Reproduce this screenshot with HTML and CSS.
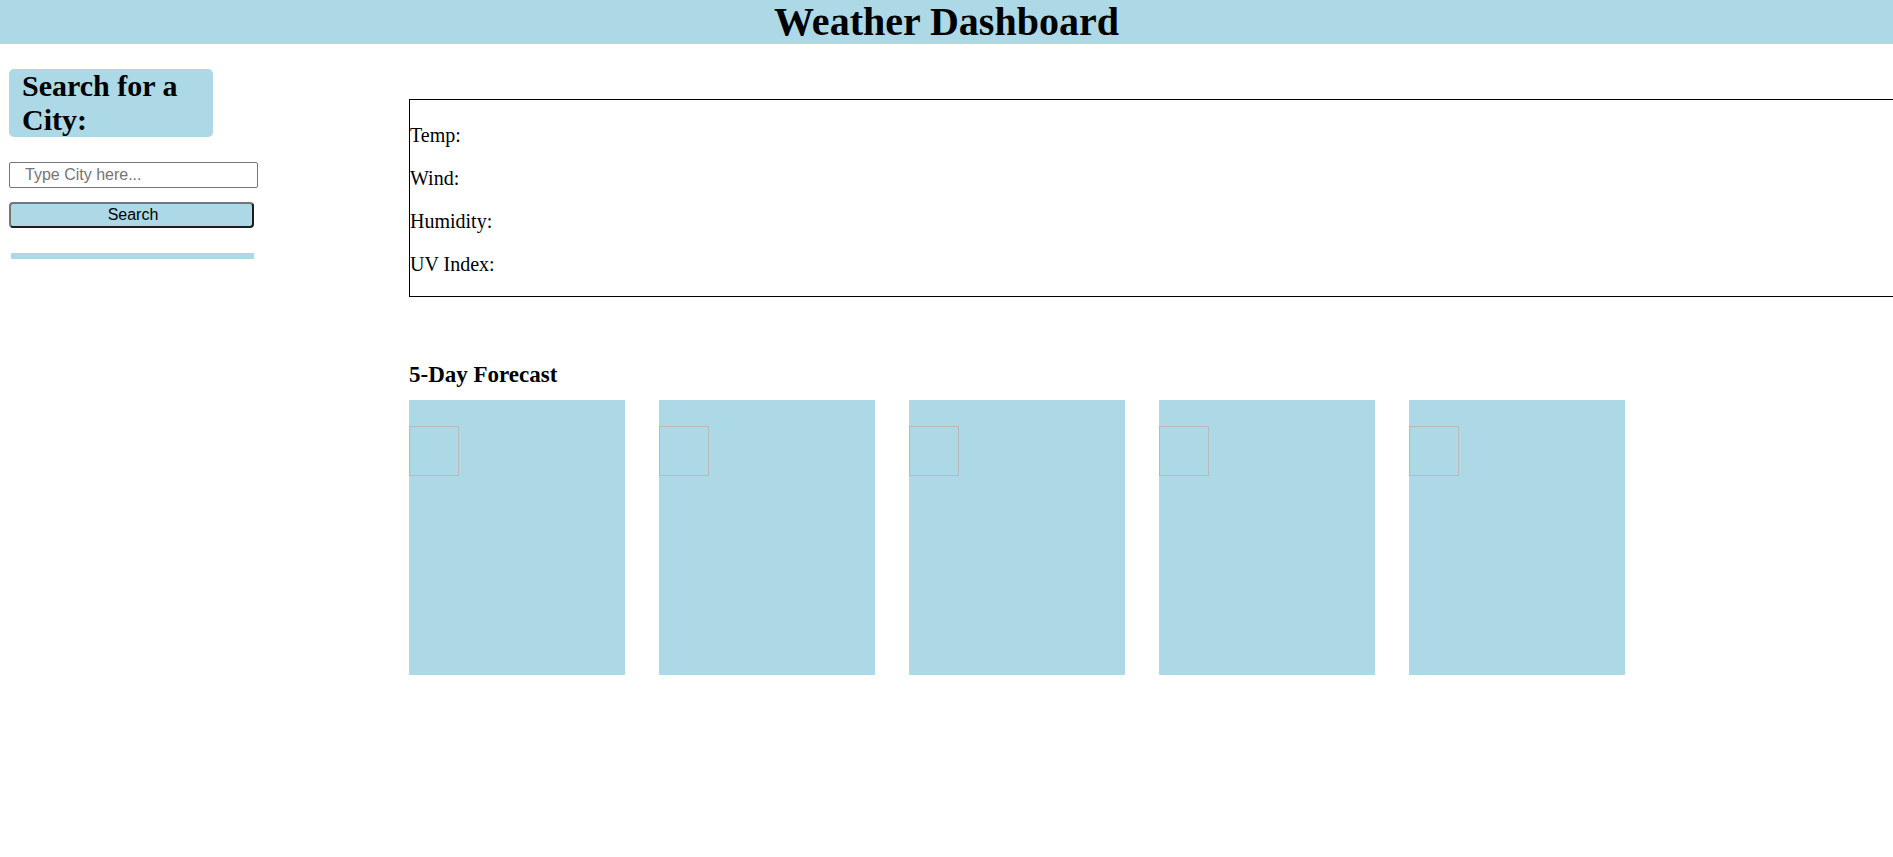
FILE: index.html
```html
<!DOCTYPE html>
<html lang="en">
<head>
<meta charset="utf-8">
<title>Weather Dashboard</title>
<link rel="stylesheet" href="styles.css">
</head>
<body>
<header class="top-bar">
  <h1 class="title">Weather Dashboard</h1>
</header>
<div class="layout">
  <aside class="sidebar">
    <h2 class="search-title">Search for a City:</h2>
    <input class="city-input" type="text" placeholder="Type City here...">
    <button class="search-btn" type="button">Search</button>
    <div class="history-bar"></div>
  </aside>
  <main class="content">
    <section class="current">
      <p class="stat">Temp:</p>
      <p class="stat">Wind:</p>
      <p class="stat">Humidity:</p>
      <p class="stat">UV Index:</p>
    </section>
    <h3 class="forecast-title">5-Day Forecast</h3>
    <div class="forecast-row">
      <div class="card"><div class="icon-box"></div></div>
      <div class="card"><div class="icon-box"></div></div>
      <div class="card"><div class="icon-box"></div></div>
      <div class="card"><div class="icon-box"></div></div>
      <div class="card"><div class="icon-box"></div></div>
    </div>
  </main>
</div>
</body>
</html>
```

FILE: styles.css
```css
html, body {
  margin: 0;
  padding: 0;
  overflow-x: hidden;
  background: #ffffff;
  font-family: "Liberation Serif", "Times New Roman", serif;
  color: #000;
}

.top-bar {
  background: #add8e6;
  height: 44px;
  text-align: center;
}

.title {
  margin: 0;
  font-size: 40px;
  line-height: 44px;
  font-weight: bold;
}

.layout {
  display: flex;
  align-items: flex-start;
}

.sidebar {
  width: 400px;
  flex: 0 0 400px;
  padding: 25px 0 0 9px;
  display: flex;
  flex-direction: column;
  align-items: flex-start;
}

.search-title {
  margin: 0;
  width: 191px;
  padding-left: 13px;
  background: #add8e6;
  border-radius: 5px;
  font-size: 30px;
  line-height: 34px;
  font-weight: bold;
}

.city-input {
  margin-top: 25px;
  box-sizing: border-box;
  width: 249px;
  height: 26px;
  padding: 0 0 0 15px;
  border: 1px solid #767676;
  border-radius: 2px;
  font-family: "Liberation Sans", Arial, sans-serif;
  font-size: 16px;
  color: #000;
  outline: none;
}

.city-input::placeholder {
  color: #757575;
}

.search-btn {
  margin-top: 14px;
  box-sizing: border-box;
  width: 245px;
  height: 26px;
  padding: 0 0 0 3px;
  background: #add8e6;
  border: 2px solid;
  border-color: #767676 #1e1e1e #1e1e1e #767676;
  border-radius: 4px;
  font-family: "Liberation Sans", Arial, sans-serif;
  font-size: 16px;
  color: #000;
}

.history-bar {
  margin: 25px 0 0 2px;
  width: 243px;
  height: 6px;
  background: #add8e6;
}

.content {
  flex: 1 1 auto;
  padding-top: 55px;
}

.current {
  width: 1600px;
  border: 1px solid #000;
  padding: 4px 0 0 0;
  display: flow-root;
}

.stat {
  margin: 20px 0;
  font-size: 20px;
  line-height: 23px;
}

.forecast-title {
  margin: 64px 0 0 0;
  font-size: 23px;
  line-height: 27px;
  font-weight: bold;
}

.forecast-row {
  margin-top: 12px;
  display: flex;
  gap: 34px;
}

.card {
  width: 216px;
  height: 275px;
  background: #add8e6;
  padding-top: 26px;
  box-sizing: border-box;
}

.icon-box {
  width: 50px;
  height: 50px;
  box-sizing: border-box;
  border: 1px solid #b9b9b9;
}
```
